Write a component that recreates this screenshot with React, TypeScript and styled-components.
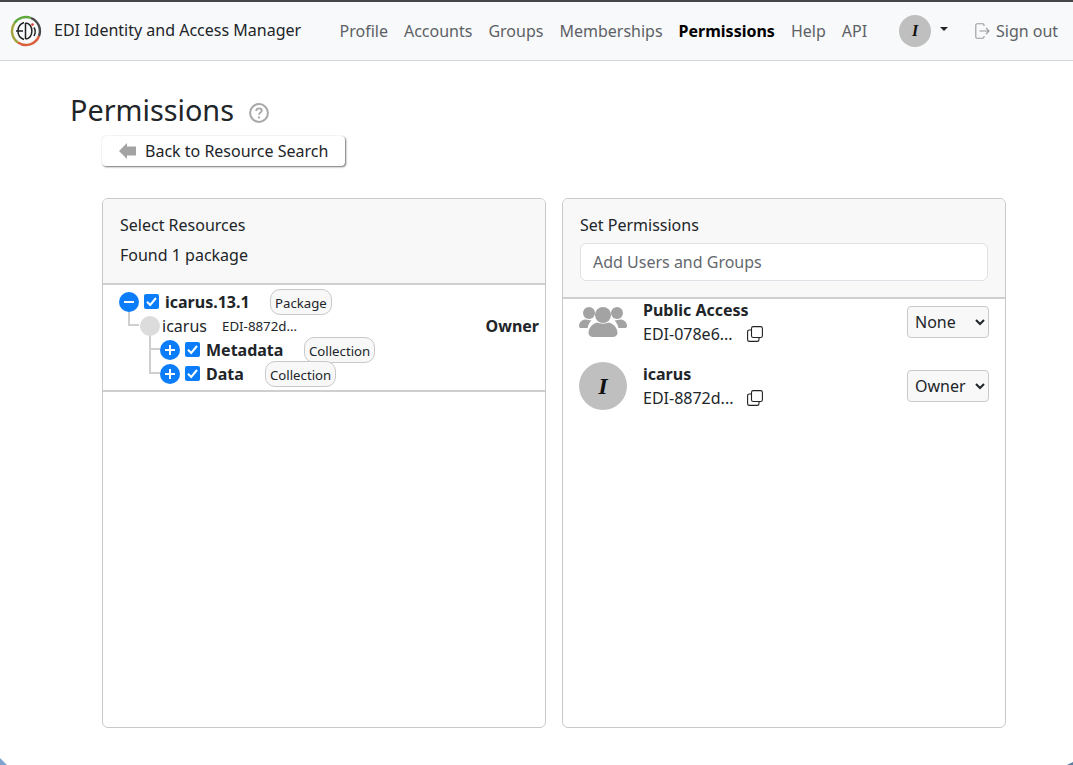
import React from "react";
import styled, { createGlobalStyle } from "styled-components";

const Global = createGlobalStyle`
  html, body { margin: 0; padding: 0; background: #fff; }
  body { font-family: "Noto Sans", sans-serif; font-size: 16px; line-height: 24px; color: #212529; }
`;

const Page = styled.div`
  width: 1073px;
  height: 765px;
  overflow: hidden;
  display: flex;
  flex-direction: column;
  position: relative;
`;

const NavBar = styled.header`
  flex: none;
  display: flex;
  align-items: center;
  background: #f8f9fa;
  border-top: 2px solid #444649;
  border-bottom: 1px solid #d3d6da;
  padding: 0 15px 0 10px;
  height: 58px;
`;

const Brand = styled.div`
  display: flex;
  align-items: center;
  gap: 12px;
  margin-top: -3px;
  width: 321.5px;
  flex: none;
  color: #212529;
  svg { margin-top: 3px; }
`;

const NavLink = styled.span<{ $active?: boolean }>`
  padding: 0 8px;
  color: ${(p) => (p.$active ? "#000" : "#5d6166")};
  font-weight: ${(p) => (p.$active ? 700 : 400)};
  white-space: nowrap;
`;

const NavLinks = styled.nav`
  display: flex;
  align-items: center;
  width: 567.5px;
  flex: none;
`;

const UserToggle = styled.div`
  display: flex;
  align-items: center;
  gap: 9px;
  width: 76px;
  flex: none;
`;

const Caret = styled.span`
  width: 0;
  height: 0;
  border-top: 4.8px solid #212529;
  border-left: 4.8px solid transparent;
  border-right: 4.8px solid transparent;
  margin-top: -4px;
`;

const Avatar = styled.span<{ $size: number }>`
  width: ${(p) => p.$size}px;
  height: ${(p) => p.$size}px;
  flex: none;
  border-radius: 50%;
  background: #bfbfbf;
  color: #111;
  display: flex;
  align-items: center;
  justify-content: center;
  font-family: "Liberation Serif", serif;
  font-style: italic;
  font-weight: 700;
  font-size: ${(p) => p.$size * 0.5}px;
`;

const SignOut = styled.span`
  display: flex;
  align-items: center;
  gap: 6px;
  color: #5d6166;
  white-space: nowrap;
`;

const Main = styled.main`
  padding: 0 0 0 70px;
  flex: 1;
`;

const TitleRow = styled.div`
  display: flex;
  align-items: center;
  gap: 15px;
  height: 38px;
  margin-top: 30px;
  svg { margin-top: 6px; }
`;

const Title = styled.h2`
  margin: 0;
  font-size: 28.8px;
  font-weight: 400;
  line-height: 38px;
`;

const BackButton = styled.button`
  display: flex;
  align-items: center;
  gap: 8px;
  width: 243px;
  height: 30px;
  margin: 7px 0 0 32px;
  padding: 0 0 0 17px;
  box-sizing: border-box;
  border: none;
  border-radius: 4px;
  background: #fff;
  font: inherit;
  color: #212529;
  box-shadow: 1px 1px 2px rgba(0, 0, 0, 0.55), 0 0 1px rgba(0, 0, 0, 0.2);
`;

const Panels = styled.div`
  display: flex;
  gap: 16px;
  margin: 32px 0 0 32px;
`;

const Panel = styled.section`
  width: 444px;
  height: 530px;
  box-sizing: border-box;
  border: 1px solid #c9c9c9;
  border-radius: 6px;
  overflow: hidden;
`;

const PanelHeader = styled.div<{ $height: number }>`
  height: ${(p) => p.$height}px;
  box-sizing: border-box;
  background: #f8f8f8;
  border-bottom: 2px solid #cfcfcf;
  padding: 14px 17px 0;
  display: flex;
  flex-direction: column;
`;

const HeaderLine = styled.div`
  height: 30px;
  line-height: 24px;
`;

const SearchInput = styled.input`
  height: 38px;
  width: 100%;
  box-sizing: border-box;
  border: 1px solid #dee2e6;
  border-radius: 6px;
  padding: 0 12px;
  background: #fff;
  font: inherit;
  &::placeholder { color: #63686d; opacity: 1; }
`;

const Tree = styled.div`
  height: 107px;
  box-sizing: border-box;
  padding: 5px 0 0 16px;
  border-bottom: 2px solid #cfcfcf;
  position: relative;
`;

const TreeRow = styled.div<{ $indent: number }>`
  height: 24px;
  display: flex;
  align-items: center;
  padding-left: ${(p) => p.$indent}px;
  position: relative;
`;

const Toggle = styled.span`
  width: 20px;
  height: 20px;
  flex: none;
  border-radius: 50%;
  background: #0b7dfb;
  position: relative;
  z-index: 1;
`;

const Elbow = styled.span<{ $left: number; $height: number }>`
  position: absolute;
  left: ${(p) => p.$left}px;
  bottom: 12px;
  width: 11px;
  height: ${(p) => p.$height}px;
  border-left: 2px solid #cfcfcf;
  border-bottom: 2px solid #cfcfcf;
  box-sizing: border-box;
`;

const Check = styled.span`
  width: 15px;
  height: 15px;
  flex: none;
  margin-left: 5px;
  margin-right: -1px;
  border-radius: 2px;
  background: #0b7dfb;
  display: flex;
  margin-top: -2px;
`;

const Dot = styled.span`
  width: 20px;
  height: 20px;
  flex: none;
  border-radius: 50%;
  background: #dcdcdc;
  position: relative;
  z-index: 1;
`;

const TreeLabel = styled.span<{ $width: number }>`
  width: ${(p) => p.$width}px;
  flex: none;
  margin-left: 7px;
  font-weight: 700;
  white-space: nowrap;
`;

const TypeBadge = styled.span`
  flex: none;
  height: 26px;
  box-sizing: border-box;
  border: 1px solid #c9c9c9;
  border-radius: 10px;
  background: #f8f8f8;
  padding: 0 4px;
  font-size: 13.2px;
  line-height: 26px;
  position: relative;
  z-index: 1;
`;

const Principal = styled.span`
  margin-left: 2px;
  width: 60px;
  flex: none;
`;

const PrincipalId = styled.span`
  font-size: 13.3px;
  flex: 1;
  margin-top: -1px;
`;

const OwnerLabel = styled.span`
  font-weight: 700;
  margin-right: 6px;
`;

const PermList = styled.div`
  margin-top: -1px;
`;

const PermRow = styled.div`
  height: 64px;
  display: flex;
  align-items: flex-start;
  padding: 0 16px;
`;

const PermBody = styled.div`
  margin-left: 16px;
  width: 264px;
  flex: none;
`;

const PermName = styled.div`
  font-weight: 700;
  line-height: 24px;
`;

const IdRow = styled.div`
  display: flex;
  align-items: center;
  gap: 14px;
  line-height: 24px;
`;

const PermSelect = styled.select`
  width: 82px;
  height: 32px;
  margin-top: 8px;
  box-sizing: border-box;
  border: 1px solid #c9c9c9;
  border-radius: 4px;
  background: #f8f8f8;
  padding: 0 3px;
  font: inherit;
  color: #212529;
`;

const GroupIconBox = styled.span`
  width: 48px;
  height: 48px;
  flex: none;
  display: flex;
  align-items: center;
  justify-content: center;
`;

const WindowCorner = styled.svg<{ $side: "left" | "right" }>`
  position: absolute;
  bottom: 0;
  ${(p) => p.$side}: 0;
  display: block;
`;

const Logo = () => (
  <svg width="32" height="32" viewBox="0 0 32 32" fill="none">
    <path d="M4.5 8A14 14 0 0 1 21 3" stroke="#5fa83c" strokeWidth="2.4" />
    <path d="M4.5 8A14 14 0 0 0 8 27.5" stroke="#a3a23a" strokeWidth="2.4" />
    <path d="M8 27.5A14 14 0 0 0 29 21" stroke="#d9603a" strokeWidth="2.4" />
    <path d="M29 21A14 14 0 0 0 21 3" stroke="#4a4a4a" strokeWidth="2.4" />
    <path d="M14 7.5A9 9 0 0 0 14 24.5M6 16H13" stroke="#222" strokeWidth="1.5" />
    <path d="M15.5 8V24M15.5 8C24 8 24 24 15.5 24" stroke="#222" strokeWidth="1.5" />
    <path d="M24 12.5C25.6 15 25.6 18 24 21" stroke="#222" strokeWidth="1.5" />
    <circle cx="22.5" cy="9.5" r="1.3" fill="#d8392f" />
  </svg>
);

const HelpIcon = () => (
  <svg width="20" height="20" viewBox="0 0 20 20" fill="none">
    <circle cx="10" cy="10" r="8.9" stroke="#a8a8a8" strokeWidth="2" />
    <path d="M7.2 8C7.2 6.4 8.6 5.4 10 5.4S12.8 6.4 12.8 7.8C12.8 9.6 10 9.6 10 11.8" stroke="#a8a8a8" strokeWidth="1.8" />
    <circle cx="10" cy="14.4" r="1.1" fill="#a8a8a8" />
  </svg>
);

const BackArrow = () => (
  <svg width="18" height="16" viewBox="0 0 18 16">
    <path d="M0 8L8 0V3.5H17V12.5H8V16Z" fill="#a3a3a3" />
  </svg>
);

const SignOutIcon = () => (
  <svg width="15" height="16" viewBox="0 0 15 16" fill="none" stroke="#9a9a9a" strokeWidth="1.1">
    <path d="M9 3V2C9 1.2 8.4 0.8 7.8 0.8H2C1.2 0.8 0.8 1.3 0.8 2V14C0.8 14.7 1.2 15.2 2 15.2H7.8C8.4 15.2 9 14.8 9 14V13" />
    <path d="M4.5 8H14M11 5L14 8L11 11" />
  </svg>
);

const CheckMark = () => (
  <svg width="15" height="15" viewBox="0 0 15 15" fill="none">
    <path d="M3 7.8L6.2 11L12 4" stroke="#fff" strokeWidth="2" />
  </svg>
);

const ToggleGlyph = ({ plus }: { plus?: boolean }) => (
  <svg width="20" height="20" viewBox="0 0 20 20" fill="none" style={{ display: "block" }}>
    <path d={plus ? "M5 10H15M10 5V15" : "M5 10H15"} stroke="#fff" strokeWidth="2" />
  </svg>
);

const CopyIcon = () => (
  <svg width="16" height="16" viewBox="0 0 16 16" fill="none" stroke="#222" strokeWidth="1.1">
    <rect x="4.5" y="0.6" width="10.9" height="10.9" rx="1.8" />
    <path d="M4.5 4H2.3C1.3 4 0.6 4.7 0.6 5.7V13.7C0.6 14.7 1.3 15.4 2.3 15.4H10.3C11.3 15.4 12 14.7 12 13.7V11.5" />
  </svg>
);

const GroupIcon = () => (
  <svg width="48" height="30" viewBox="0 0 48 30" fill="#a3a3a3">
    <circle cx="10" cy="6" r="6" />
    <circle cx="38" cy="6" r="6" />
    <path d="M0 19C0 15 3.5 12.5 6.5 12.5C8.5 12.5 10 13.5 12.5 13.5C10.5 15.5 9 18 8.6 21H2C0.8 21 0 20.5 0 19Z" />
    <path d="M48 19C48 15 44.5 12.5 41.5 12.5C39.5 12.5 38 13.5 35.5 13.5C37.5 15.5 39 18 39.4 21H46C47.2 21 48 20.5 48 19Z" />
    <circle cx="24" cy="8" r="8" />
    <path d="M9.5 26C9.5 21 14 16 18.5 15.5C20.5 17 27.5 17 29.5 15.5C34 16 38.5 21 38.5 26C38.5 28.5 36 30 33.5 30H14.5C12 30 9.5 28.5 9.5 26Z" />
  </svg>
);

export default function App() {
  return (
    <Page>
      <Global />
      <NavBar>
        <Brand>
          <Logo />
          <span>EDI Identity and Access Manager</span>
        </Brand>
        <NavLinks>
          <NavLink>Profile</NavLink>
          <NavLink>Accounts</NavLink>
          <NavLink>Groups</NavLink>
          <NavLink>Memberships</NavLink>
          <NavLink $active>Permissions</NavLink>
          <NavLink>Help</NavLink>
          <NavLink>API</NavLink>
        </NavLinks>
        <UserToggle>
          <Avatar $size={32}>I</Avatar>
          <Caret />
        </UserToggle>
        <SignOut>
          <SignOutIcon />
          Sign out
        </SignOut>
      </NavBar>
      <Main>
        <TitleRow>
          <Title>Permissions</Title>
          <HelpIcon />
        </TitleRow>
        <BackButton>
          <BackArrow />
          Back to Resource Search
        </BackButton>
        <Panels>
          <Panel>
            <PanelHeader $height={86}>
              <HeaderLine>Select Resources</HeaderLine>
              <HeaderLine>Found 1 package</HeaderLine>
            </PanelHeader>
            <Tree>
              <TreeRow $indent={0}>
                <Toggle><ToggleGlyph /></Toggle>
                <Check><CheckMark /></Check>
                <TreeLabel $width={105}>icarus.13.1</TreeLabel>
                <TypeBadge>Package</TypeBadge>
              </TreeRow>
              <TreeRow $indent={21}>
                <Elbow $left={9} $height={26} />
                <Dot />
                <Principal>icarus</Principal>
                <PrincipalId>EDI-8872d...</PrincipalId>
                <OwnerLabel>Owner</OwnerLabel>
              </TreeRow>
              <TreeRow $indent={41}>
                <Elbow $left={30} $height={26} />
                <Toggle><ToggleGlyph plus /></Toggle>
                <Check><CheckMark /></Check>
                <TreeLabel $width={98}>Metadata</TreeLabel>
                <TypeBadge>Collection</TypeBadge>
              </TreeRow>
              <TreeRow $indent={41}>
                <Elbow $left={30} $height={26} />
                <Toggle><ToggleGlyph plus /></Toggle>
                <Check><CheckMark /></Check>
                <TreeLabel $width={59}>Data</TreeLabel>
                <TypeBadge>Collection</TypeBadge>
              </TreeRow>
            </Tree>
          </Panel>
          <Panel>
            <PanelHeader $height={100}>
              <HeaderLine>Set Permissions</HeaderLine>
              <SearchInput placeholder="Add Users and Groups" readOnly />
            </PanelHeader>
            <PermList>
              <PermRow>
                <GroupIconBox><GroupIcon /></GroupIconBox>
                <PermBody>
                  <PermName>Public Access</PermName>
                  <IdRow>EDI-078e6... <CopyIcon /></IdRow>
                </PermBody>
                <PermSelect defaultValue="None"><option>None</option><option>Owner</option></PermSelect>
              </PermRow>
              <PermRow>
                <Avatar $size={48}>I</Avatar>
                <PermBody>
                  <PermName>icarus</PermName>
                  <IdRow>EDI-8872d... <CopyIcon /></IdRow>
                </PermBody>
                <PermSelect defaultValue="Owner"><option>None</option><option>Owner</option></PermSelect>
              </PermRow>
            </PermList>
          </Panel>
        </Panels>
      </Main>
      <WindowCorner $side="left" width="8" height="8" viewBox="0 0 8 8">
        <path d="M0 1L7 8H0Z" fill="#7fa3cf" />
      </WindowCorner>
      <WindowCorner $side="right" width="6" height="3" viewBox="0 0 6 3">
        <path d="M0 3L6 0V3Z" fill="#5f7f9f" />
      </WindowCorner>
    </Page>
  );
}
